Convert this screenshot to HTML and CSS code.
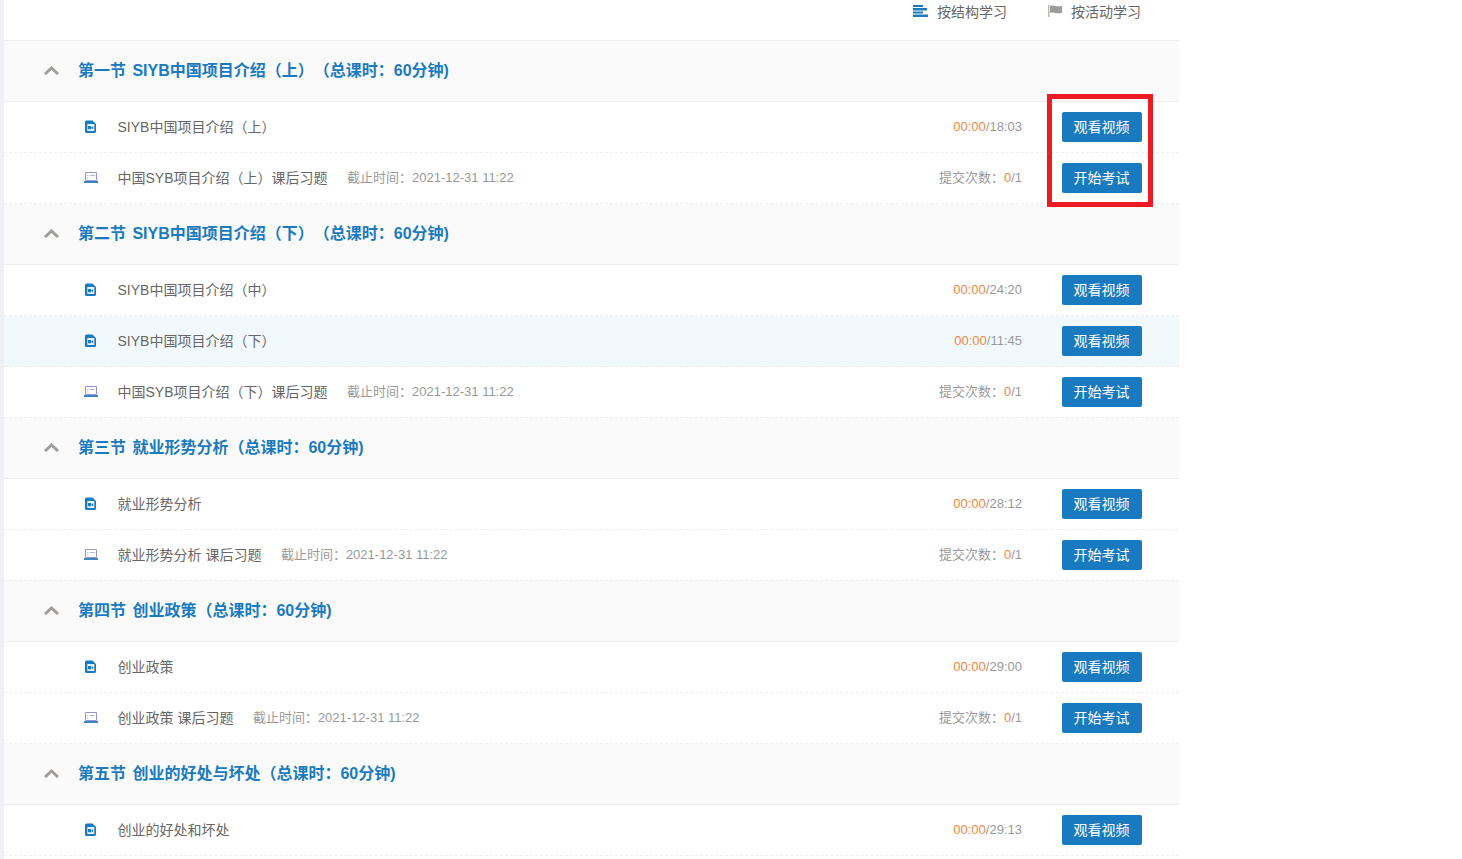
FILE: index.html
```html
<!DOCTYPE html>
<html lang="zh-CN">
<head>
    <meta charset="UTF-8">
    <title>课程目录</title>
    <link rel="stylesheet" href="styles.css">
</head>
<body>
    <svg class="sprite" width="0" height="0">
        <symbol id="i-video" viewBox="0 0 14 13">
            <path fill="#1a7abf" d="M2.500.5H8.500L12 4v7.500A1.500 1.500 0 0 1 10.500 13h-8A1.500 1.500 0 0 1 1 11.500V2A1.500 1.500 0 0 1 2.500.5z"/>
            <path fill="#eaf3fa" d="M3.300 4h7v7h-7z"/>
            <path fill="#1a7abf" d="M4 6h3.200v3.300H4zM7.600 7.300l1.600-1v3l-1.600-1z"/>
        </symbol>
        <symbol id="i-exam" viewBox="0 0 14 13">
            <path fill="none" stroke="#8f97cc" d="M1.500 1.500h11v8h-11z"/>
            <path fill="none" stroke="#aebbd8" d="M3 4.500h1.500M6 4.500h5M3 7h1.500"/>
            <path fill="#3f83c0" d="M0 10h14v2H0z"/>
        </symbol>
    </svg>

    <div class="container">
        <div class="tabs">
            <a class="tab">
                <svg width="15" height="12" viewBox="0 0 15 12"><path fill="#1a7abf" d="M0 0h10v2H0zM0 3h14v2.500H0zM0 6.500h10v2H0zM0 9.500h15V12H0z"/></svg>
                按结构学习
            </a>
            <a class="tab">
                <svg width="14" height="12" viewBox="0 0 14 12"><path fill="#c4b8ad" d="M0 0h1.500v12H0z"/><path fill="#9c9c9c" d="M2 1c3-1.500 5 1.200 12 0v7c-6 1.200-9-1.500-12 0z"/></svg>
                按活动学习
            </a>
        </div>

        <div class="section">
            <svg class="chevron" width="15" height="9" viewBox="0 0 15 9"><path fill="none" stroke="#a09d9a" stroke-width="3" d="M1 8l6.500-6L14 8"/></svg>
            <h3>第一节 SIYB中国项目介绍（上）（总课时：60分钟)</h3>
        </div>
        <div class="row">
            <svg class="row-icon"><use href="#i-video"/></svg>
            <span class="name">SIYB中国项目介绍（上）</span>
            <span class="progress"><em>00:00</em>/18:03</span>
            <button class="btn">观看视频</button>
        </div>
        <div class="row">
            <svg class="row-icon"><use href="#i-exam"/></svg>
            <span class="name">中国SYB项目介绍（上）课后习题</span>
            <span class="deadline">截止时间：2021-12-31 11:22</span>
            <span class="progress">提交次数：<em>0</em>/1</span>
            <button class="btn">开始考试</button>
        </div>

        <div class="section">
            <svg class="chevron" width="15" height="9" viewBox="0 0 15 9"><path fill="none" stroke="#a09d9a" stroke-width="3" d="M1 8l6.500-6L14 8"/></svg>
            <h3>第二节 SIYB中国项目介绍（下）（总课时：60分钟)</h3>
        </div>
        <div class="row">
            <svg class="row-icon"><use href="#i-video"/></svg>
            <span class="name">SIYB中国项目介绍（中）</span>
            <span class="progress"><em>00:00</em>/24:20</span>
            <button class="btn">观看视频</button>
        </div>
        <div class="row current">
            <svg class="row-icon"><use href="#i-video"/></svg>
            <span class="name">SIYB中国项目介绍（下）</span>
            <span class="progress"><em>00:00</em>/11:45</span>
            <button class="btn">观看视频</button>
        </div>
        <div class="row">
            <svg class="row-icon"><use href="#i-exam"/></svg>
            <span class="name">中国SYB项目介绍（下）课后习题</span>
            <span class="deadline">截止时间：2021-12-31 11:22</span>
            <span class="progress">提交次数：<em>0</em>/1</span>
            <button class="btn">开始考试</button>
        </div>

        <div class="section">
            <svg class="chevron" width="15" height="9" viewBox="0 0 15 9"><path fill="none" stroke="#a09d9a" stroke-width="3" d="M1 8l6.500-6L14 8"/></svg>
            <h3>第三节 就业形势分析（总课时：60分钟)</h3>
        </div>
        <div class="row">
            <svg class="row-icon"><use href="#i-video"/></svg>
            <span class="name">就业形势分析</span>
            <span class="progress"><em>00:00</em>/28:12</span>
            <button class="btn">观看视频</button>
        </div>
        <div class="row">
            <svg class="row-icon"><use href="#i-exam"/></svg>
            <span class="name">就业形势分析 课后习题</span>
            <span class="deadline">截止时间：2021-12-31 11:22</span>
            <span class="progress">提交次数：<em>0</em>/1</span>
            <button class="btn">开始考试</button>
        </div>

        <div class="section">
            <svg class="chevron" width="15" height="9" viewBox="0 0 15 9"><path fill="none" stroke="#a09d9a" stroke-width="3" d="M1 8l6.500-6L14 8"/></svg>
            <h3>第四节 创业政策（总课时：60分钟)</h3>
        </div>
        <div class="row">
            <svg class="row-icon"><use href="#i-video"/></svg>
            <span class="name">创业政策</span>
            <span class="progress"><em>00:00</em>/29:00</span>
            <button class="btn">观看视频</button>
        </div>
        <div class="row">
            <svg class="row-icon"><use href="#i-exam"/></svg>
            <span class="name">创业政策 课后习题</span>
            <span class="deadline">截止时间：2021-12-31 11:22</span>
            <span class="progress">提交次数：<em>0</em>/1</span>
            <button class="btn">开始考试</button>
        </div>

        <div class="section">
            <svg class="chevron" width="15" height="9" viewBox="0 0 15 9"><path fill="none" stroke="#a09d9a" stroke-width="3" d="M1 8l6.500-6L14 8"/></svg>
            <h3>第五节 创业的好处与坏处（总课时：60分钟)</h3>
        </div>
        <div class="row">
            <svg class="row-icon"><use href="#i-video"/></svg>
            <span class="name">创业的好处和坏处</span>
            <span class="progress"><em>00:00</em>/29:13</span>
            <button class="btn">观看视频</button>
        </div>

        <div class="highlight"></div>
    </div>
</body>
</html>
```

FILE: styles.css
```css
html, body {
    height: 100%;
    overflow: hidden;
}

body {
    margin: 0;
    background: white;
    font-family: "Liberation Sans", "Noto Sans CJK SC", sans-serif;
    font-size: 14px;
    color: #666;
}

.sprite {
    position: absolute;
}

.container {
    position: relative;
    width: 1175px;
    height: 100%;
    margin-left: 4px;
    box-shadow: -4px 0 0 #eef0f4;
}

.tabs {
    display: flex;
    justify-content: flex-end;
    gap: 41px;
    height: 24px;
    padding-right: 38px;
    padding-bottom: 16px;
    border-bottom: 1px solid #eeeeee;
}

.tab {
    display: flex;
    align-items: center;
    gap: 9px;
    padding-bottom: 2px;
    color: #666;
}

.section {
    display: flex;
    align-items: center;
    height: 60px;
    background: #fafafa;
    border-bottom: 1px solid #eeeeee;
}

.chevron {
    margin-left: 40px;
    margin-right: 19px;
    margin-bottom: 2px;
}

.section h3 {
    margin: 0;
    padding-bottom: 4px;
    font-size: 16px;
    font-weight: 700;
    word-spacing: 2px;
    text-spacing-trim: space-all;
    color: #1a7abf;
}

.row {
    display: flex;
    align-items: center;
    height: 50px;
    padding-left: 80px;
    padding-right: 37px;
    border-bottom: 1px dashed #eeeeee;
}

.row.current {
    background: #f2f9fd;
}

.row-icon {
    width: 14px;
    height: 13px;
    margin-right: 19.5px;
    margin-bottom: 1px;
    flex-shrink: 0;
}

.name {
    padding-bottom: 2px;
    color: #666;
}

.deadline {
    margin-left: 19.5px;
    padding-bottom: 3px;
    font-size: 13px;
    color: #999;
}

.progress {
    margin-left: auto;
    margin-right: 40px;
    font-size: 13px;
    line-height: 18px;
    color: #999;
}

.progress em {
    font-style: normal;
    color: #f5853a;
}

.btn {
    width: 80px;
    height: 30px;
    padding: 0 1px 2px 0;
    border: none;
    border-radius: 2px;
    background: #1a7abf;
    color: white;
    font-family: inherit;
    font-size: 14px;
}

.highlight {
    position: absolute;
    left: 1043px;
    top: 94px;
    width: 106px;
    height: 113px;
    box-sizing: border-box;
    border: 5px solid #ed1c24;
}
```
